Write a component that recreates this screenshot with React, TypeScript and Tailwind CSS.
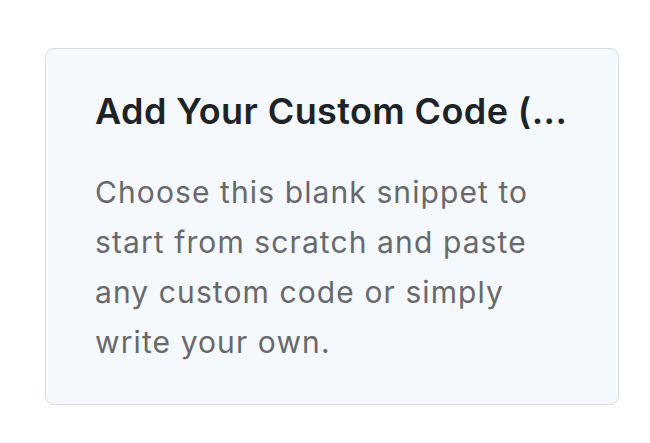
export default function App() {
  return (
    <div className="min-h-screen bg-white pt-[48px] pl-[45px] font-['Inter',sans-serif]">
      <div className="box-border h-[357px] w-[574px] rounded-[9px] border-[1.5px] border-[#dcdcde] bg-[#f5f8fd] px-[49px] pt-[41px]">
        <h3 className="truncate text-[36px] font-semibold leading-[43px] tracking-[0.4px] text-[#1d2327]">
          Add Your Custom Code (...
        </h3>
        <p className="mt-[34px] text-[30px] leading-[50px] tracking-[1.1px] text-[#68696c]">
          Choose this blank snippet to start from scratch and paste any custom
          code or simply write your own.
        </p>
      </div>
    </div>
  );
}
